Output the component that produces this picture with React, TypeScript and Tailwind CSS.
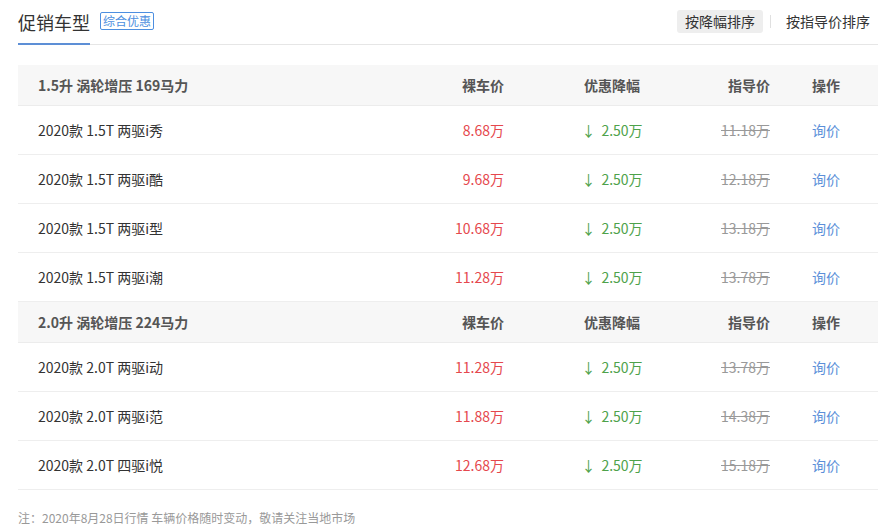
import React from "react";

type Row = { name: string; price: string; cut: string; guide: string };
type Group = { title: string; rows: Row[] };

const groups: Group[] = [
  {
    title: "1.5升 涡轮增压 169马力",
    rows: [
      { name: "2020款 1.5T 两驱i秀", price: "8.68万", cut: "2.50万", guide: "11.18万" },
      { name: "2020款 1.5T 两驱i酷", price: "9.68万", cut: "2.50万", guide: "12.18万" },
      { name: "2020款 1.5T 两驱i型", price: "10.68万", cut: "2.50万", guide: "13.18万" },
      { name: "2020款 1.5T 两驱i潮", price: "11.28万", cut: "2.50万", guide: "13.78万" },
    ],
  },
  {
    title: "2.0升 涡轮增压 224马力",
    rows: [
      { name: "2020款 2.0T 两驱i动", price: "11.28万", cut: "2.50万", guide: "13.78万" },
      { name: "2020款 2.0T 两驱i范", price: "11.88万", cut: "2.50万", guide: "14.38万" },
      { name: "2020款 2.0T 四驱i悦", price: "12.68万", cut: "2.50万", guide: "15.18万" },
    ],
  },
];

const cols = "grid grid-cols-[386px_100px_216px_50px_108px] items-center";

export default function App() {
  return (
    <div
      className="w-[888px] h-[532px] bg-white text-[#333] overflow-hidden"
      style={{ fontFamily: '"Microsoft YaHei", "Noto Sans CJK SC", "Noto Sans", sans-serif' }}
    >
      <div className="mx-[18px] w-[860px] h-[45px] flex items-end justify-between border-b border-[#e6e6e6]">
        <div className="flex items-center h-full">
          <div className="h-full flex items-center border-b-2 border-[#5d8fd6] mb-[-1px] text-[18px] leading-none text-[#333]">
            促销车型
          </div>
          <span className="ml-[10px] mt-[-2px] border border-[#4d8fe0] text-[#4d8fe0] text-[12px] leading-[16px] px-[2px] rounded-[2px]">
            综合优惠
          </span>
        </div>
        <div className="flex items-center self-start mt-[10px] text-[14px] text-[#333]">
          <div className="h-[23px] px-[8px] bg-[#eeeeee] rounded-[3px] flex items-center">按降幅排序</div>
          <div className="w-px h-[13px] bg-[#e0e0e0] mx-[7px]" />
          <div className="h-[23px] px-[8px] flex items-center">按指导价排序</div>
        </div>
      </div>

      <div className="mx-[18px] w-[860px] mt-[20px] text-[14px]">
        {groups.map((g) => (
          <div key={g.title}>
            <div className={`${cols} h-[41px] bg-[#f7f7f7] border-b border-[#ececec] font-bold text-[#555]`}>
              <div className="pl-[20px]">{g.title}</div>
              <div className="text-right">裸车价</div>
              <div className="text-center">优惠降幅</div>
              <div className="text-right">指导价</div>
              <div className="text-center pl-[4px]">操作</div>
            </div>
            {g.rows.map((r) => (
              <div key={r.name} className={`${cols} h-[49px] border-b border-[#eeeeee]`}>
                <div className="pl-[20px] text-[#333]">{r.name}</div>
                <div className="text-right text-[#e5484d]">{r.price}</div>
                <div className="text-center text-[#4ea24a]">
                  <span className="mr-[6px]">↓</span>
                  {r.cut}
                </div>
                <div className="text-right text-[#999] line-through whitespace-nowrap">{r.guide}</div>
                <div className="text-center pl-[4px] text-[#5b8fd9]">询价</div>
              </div>
            ))}
          </div>
        ))}
        <div className="mt-[19px] text-[12px] text-[#999]">注：2020年8月28日行情 车辆价格随时变动，敬请关注当地市场</div>
      </div>
    </div>
  );
}
